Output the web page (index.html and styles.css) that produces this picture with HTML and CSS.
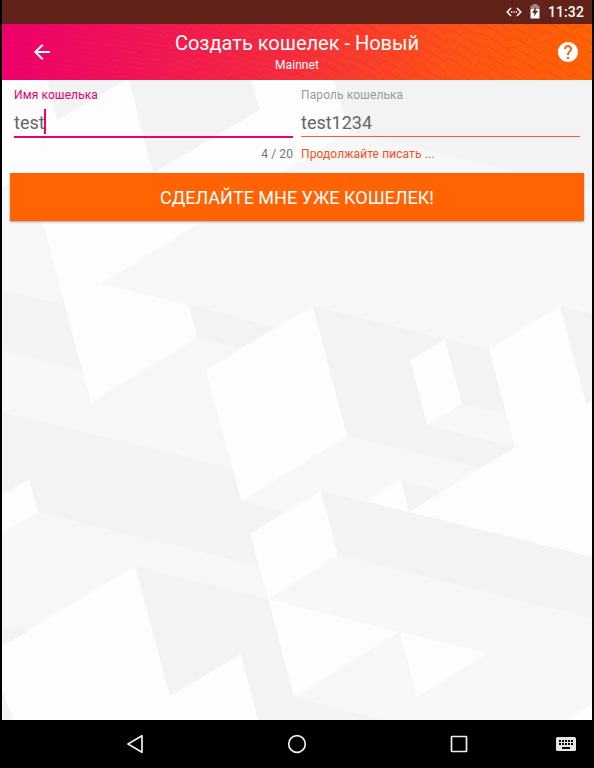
FILE: index.html
```html
<!DOCTYPE html>
<html lang="ru">
<head>
<meta charset="utf-8">
<title>Создать кошелек</title>
<link rel="stylesheet" href="styles.css">
</head>
<body>
<div class="screen">
  <header class="status">
    <svg class="debug" width="16" height="10" viewBox="0 0 16 10" fill="none" stroke="#fff" stroke-width="1.5"><path d="M5 1 1.2 5 5 9M11 1l3.8 4L11 9"/><path d="M5 5h1.3M7.4 5h1.3M9.8 5h1.3"/></svg>
    <svg class="battery" width="10" height="15" viewBox="0 0 10 15"><path d="M3 0h4v1.5h2.5V5H.5V1.5H3z" fill="#a58883"/><path d="M.5 5h9v9.5h-9z" fill="#fff"/><path d="M6 3 2 8.7h2.5L4 12.5l4-5.8H5.5z" fill="#602219"/></svg>
    <span class="clock">11:32</span>
  </header>
  <div class="appbar">
    <svg class="waves" width="590" height="56" aria-hidden="true">
      <defs>
        <pattern id="wave-left" width="34" height="5" patternUnits="userSpaceOnUse" patternTransform="rotate(6) skewX(30)"><path d="M0 1.500 28 2.500 30 4 34 1.500"/></pattern>
        <pattern id="wave-mid" width="34" height="6" patternUnits="userSpaceOnUse" patternTransform="rotate(14) skewX(25)"><path d="M0 1 28 3 30 5 34 1"/></pattern>
        <pattern id="wave-right" width="34" height="9" patternUnits="userSpaceOnUse" patternTransform="rotate(23) skewX(20)"><path d="M0 1 25 4 28 7 31 5 34 1"/></pattern>
      </defs>
      <path fill="url(#wave-left)" d="M0 0h185L155 56H0z"/>
      <path fill="url(#wave-mid)" d="M185 0h145L300 56H155z"/>
      <path fill="url(#wave-right)" d="M330 0h260v56H300z"/>
    </svg>
    <svg class="back" width="24" height="24" viewBox="0 0 24 24" fill="#fff"><path d="M20 11H7.830l5.590-5.590L12 4l-8 8 8 8 1.410-1.410L7.830 13H20v-2z"/></svg>
    <div class="heading"><h1>Создать кошелек - Новый</h1><p>Mainnet</p></div>
    <svg class="help" width="24" height="24" viewBox="0 0 24 24" fill="#fff"><path d="M12 2C6.480 2 2 6.480 2 12s4.480 10 10 10 10-4.480 10-10S17.520 2 12 2zm1 17h-2v-2h2v2zm2.070-7.750l-.9.920C13.450 12.900 13 13.500 13 15h-2v-.5c0-1.100.45-2.100 1.170-2.830l1.240-1.260c.37-.36.59-.86.59-1.410 0-1.100-.9-2-2-2s-2 .9-2 2H8c0-2.210 1.790-4 4-4s4 1.790 4 4c0 .88-.36 1.680-.93 2.250z"/></svg>
  </div>
  <main class="content">
    <svg class="facets" viewBox="2 80 590 640" width="590" height="640" aria-hidden="true">
      <g class="light">
        <path d="M2 80H334L349 131 101 284 189 305 197 338 91 402 29 171 2 188z"/>
        <path d="M206 370 313 306 347 436 241 501z"/>
        <path d="M410 360 445 339 462 404 427 425z"/>
        <path d="M489 349 560 306 586 403 592 400V557L409 512 515 447z"/>
        <path d="M365 501 401 480 409 512z"/>
        <path d="M250 534 321 491 338 555 268 599z"/>
        <path d="M2 495 29 479 38 512 2 533z"/>
        <path d="M2 646 135 566 170 696 241 654 258 720H13L2 690z"/>
        <path d="M268 599 399 632 294 697zM400 632 488 653 417 697zM567 720 592 704V720z"/>
      </g>
      <g class="shade">
        <path d="M47 80H123V82L57 120zM129 80H251L260 110 153 173z"/>
        <path d="M334 80H592V191L349 131z"/>
        <path d="M2 290 64 305 82 370 2 350zM189 305 274 327 242 348 197 338z"/>
        <path d="M313 306 445 339 410 360 427 425 515 447 480 468 347 436z"/>
        <path d="M445 339 489 349 506 414 462 404zM560 306 592 314V400L586 403z"/>
        <path d="M401 480 442 491 409 512zM321 491 592 557V618L338 555z"/>
        <path d="M2 412 232 468 241 501 284 512 250 534 258 566 38 512 29 479 2 495z"/>
        <path d="M2 625 29 631 2 646zM2 690 13 720H2z"/>
        <path d="M135 566 268 599 294 697 382 720H258L241 654 170 696z"/>
      </g>
    </svg>
    <form class="form">
      <div class="fields">
        <div class="field active">
          <label>Имя кошелька</label>
          <div class="value">test<i class="caret"></i></div>
          <p class="hint">4 / 20</p>
        </div>
        <div class="field invalid">
          <label>Пароль кошелька</label>
          <div class="value">test1234</div>
          <p class="hint">Продолжайте писать ...</p>
        </div>
      </div>
      <button type="button" class="submit">СДЕЛАЙТЕ МНЕ УЖЕ КОШЕЛЕК!</button>
    </form>
  </main>
</div>
<nav class="nav">
  <svg width="24" height="24" viewBox="0 0 24 24"><path d="M19 3.700v16.600L5 12z"/></svg>
  <svg width="24" height="24" viewBox="0 0 24 24"><circle cx="12" cy="12" r="8.300"/></svg>
  <svg width="24" height="24" viewBox="0 0 24 24"><rect x="4.500" y="4.500" width="15" height="15" rx=".5"/></svg>
  <svg class="keyboard" width="20" height="14" viewBox="0 0 20 14"><rect width="20" height="14" rx="1.500"/><path d="M3 4h14M3 7h14" stroke-dasharray="2 1"/><path d="M6 11h8"/></svg>
</nav>
</body>
</html>
```
FILE: styles.css
```css
* { box-sizing: border-box; }
body {
  margin: 0;
  height: 768px;
  overflow: hidden;
  background: #000;
  font-family: Roboto, sans-serif;
}
h1, p { margin: 0; font-weight: 400; }
svg { display: block; flex: none; }
.screen { width: 590px; margin: 0 2px; }
.status {
  height: 24px;
  display: flex;
  align-items: center;
  justify-content: flex-end;
  padding-right: 8px;
  background: #602219;
  color: #fff;
}
.battery { margin: -2px 8px 0; }
.clock { font-size: 14px; font-weight: 500; line-height: 24px; letter-spacing: .1px; }
.appbar {
  position: relative;
  height: 56px;
  display: flex;
  align-items: center;
  justify-content: space-between;
  padding: 0 12px 0 28px;
  background: linear-gradient(98deg, #f1006c 2%, #f72b3d 48%, #ff5216 76%, #ff6203 100%);
  color: #fff;
}
.waves { position: absolute; inset: 0; }
.waves pattern path { fill: none; stroke: #851b38; stroke-opacity: .2; stroke-width: .9; }
.back, .heading, .help { position: relative; }
.heading { text-align: center; padding-right: 16px; }
.heading h1 { font-size: 20px; line-height: 24px; }
.heading p { font-size: 12px; line-height: 14px; padding-top: 3px; height: 19px; letter-spacing: .07px; }
.content { position: relative; height: 640px; background: #f7f7f7; }
.facets { position: absolute; inset: 0; }
.light { fill: #fdfdfd; }
.shade { fill: #f3f3f3; }
.form { position: relative; padding: 0 8px; }
.fields { display: grid; grid-template-columns: 279px 279px; gap: 8px; padding: 8px 4px 0; height: 93px; }
.field label { display: block; height: 15px; font-size: 12px; line-height: 15px; letter-spacing: .1px; color: #9a9a9a; }
.value { height: 34px; display: flex; align-items: center; padding-top: 6px; font-size: 18px; color: #666; border-bottom: 1px solid #ff5a36; }
.hint { margin-top: 10px; font-size: 12px; line-height: 14px; letter-spacing: .1px; color: #f4511e; }
.active label { color: #e6006b; }
.active .value { height: 35px; border-bottom: 2px solid #f1006c; }
.active .hint { margin-top: 9px; text-align: right; color: #757575; }
.caret { width: 2px; height: 25px; margin: -2px 0 0 -1px; background: #f1006c; }
.submit {
  display: block;
  width: 574px;
  height: 48px;
  padding: 2px 0 0;
  border: 0;
  background: #ff6304;
  box-shadow: 0 1px 2px rgba(0, 0, 0, .35);
  color: #fff;
  font: 400 18px/46px Roboto, sans-serif;
}
.nav { height: 48px; display: flex; align-items: center; padding-left: 123px; gap: 138px; }
.nav svg { fill: none; stroke: #eee; stroke-width: 1.700; stroke-linejoin: round; }
.nav .keyboard { margin-left: -53px; stroke: none; }
.keyboard rect { fill: #e6e6e6; }
.nav .keyboard path { stroke: #000; stroke-width: 2; }
```
